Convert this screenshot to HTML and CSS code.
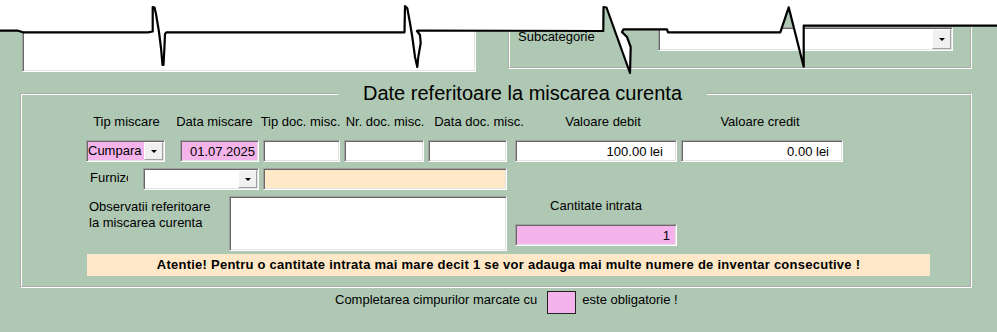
FILE: index.html
```html
<!DOCTYPE html>
<html lang="ro">
<head>
  <meta charset="UTF-8" />
  <title>Miscare inventar</title>
  <link rel="stylesheet" href="styles.css">
</head>
<body>
  <div class="page">
    <div class="top">
      <div class="memo sunken"></div>
      <div class="subgroup">
        <span class="sub-label">Subcategorie</span>
        <div class="combo combo-sub sunken">
          <span class="combo-text"></span>
          <span class="combo-btn"><i class="arrow"></i></span>
        </div>
      </div>
    </div>

    <fieldset class="frame">
      <legend>Date referitoare la miscarea curenta</legend>

      <div class="labels">
        <span class="col-tip">Tip miscare</span>
        <span class="col-data">Data miscare</span>
        <span class="col-tipdoc">Tip doc. misc.</span>
        <span class="col-nrdoc">Nr. doc. misc.</span>
        <span class="col-datadoc">Data doc. misc.</span>
        <span class="col-debit">Valoare debit</span>
        <span class="col-credit">Valoare credit</span>
      </div>

      <div class="fields">
        <div class="combo combo-tip sunken required">
          <span class="combo-text">Cumpara</span>
          <span class="combo-btn"><i class="arrow"></i></span>
        </div>
        <input type="text" class="field sunken required num in-data" value="01.07.2025" readonly />
        <input type="text" class="field sunken in-tipdoc" readonly />
        <input type="text" class="field sunken in-nrdoc" readonly />
        <input type="text" class="field sunken in-datadoc" readonly />
        <input type="text" class="field sunken num in-money" value="100.00 lei" readonly />
        <input type="text" class="field sunken num in-money" value="0.00 lei" readonly />
      </div>

      <div class="supplier">
        <span class="supplier-label">Furnizor</span>
        <div class="combo combo-supplier sunken">
          <span class="combo-text"></span>
          <span class="combo-btn"><i class="arrow"></i></span>
        </div>
        <input type="text" class="field sunken peach in-supplier" readonly />
      </div>

      <div class="notes">
        <span class="notes-label">Observatii referitoare<br>la miscarea curenta</span>
        <textarea class="memo-notes sunken" readonly></textarea>
        <div class="qty">
          <span class="qty-label">Cantitate intrata</span>
          <input type="text" class="field sunken required num in-qty" value="1" readonly />
        </div>
      </div>

      <div class="warning">Atentie! Pentru o cantitate intrata mai mare decit 1 se vor adauga mai multe numere de inventar consecutive !</div>
    </fieldset>

    <div class="footer">
      <span>Completarea cimpurilor marcate cu</span>
      <span class="mark"></span>
      <span>este obligatorie !</span>
    </div>

    <svg class="tear" width="997" height="80" viewBox="0 0 997 80">
      <polygon class="tear-fill" points="0,30.7 18,30.7 23,32.3 148,32.3 152.7,31.5 152.7,7 154.5,7.5 156,14 159,32 161,48 162.5,65 163.5,65 164.3,50 165,34 166.5,32.3 404.5,32.3 405,6 407.3,8.3 410,23 412.3,37 415,57 417.3,67 418.3,57 420.7,43 420,35 417,31 418,30.5 603.3,31 603.5,7 606.5,7.5 630,73 630.7,47 627,37 622,32 623.5,29.3 667,29.3 668,32.3 780.3,32.3 788.7,7.3 803.7,66.7 803.7,25.7 997,25.7 997,0 0,0" />
      <polyline class="tear-line" points="0,30.7 18,30.7 23,32.3 148,32.3 152.7,31.5 152.7,7 154.5,7.5 156,14 159,32 161,48 162.5,65 163.5,65 164.3,50 165,34 166.5,32.3 404.5,32.3 405,6 407.3,8.3 410,23 412.3,37 415,57 417.3,67 418.3,57 420.7,43 420,35 417,31 418,30.5 603.3,31 603.5,7 606.5,7.5 630,73 630.7,47 627,37 622,32 623.5,29.3 667,29.3 668,32.3 780.3,32.3 788.7,7.3 803.7,66.7 803.7,25.7 997,25.7" />
    </svg>
  </div>
</body>
</html>
```

FILE: styles.css
```css
* {
  box-sizing: border-box;
  margin: 0;
  padding: 0;
}

body {
  background-color: #afc8b4;
  font-family: "Liberation Sans", Arial, sans-serif;
  font-size: 13px;
  color: #000;
}

.page {
  position: relative;
  width: 997px;
  height: 332px;
  overflow: hidden;
}

/* classic sunken 3d edge */
.sunken {
  border: 1px solid;
  border-color: #a0a0a0 #fff #fff #a0a0a0;
  box-shadow: inset 1px 1px 0 #696969, inset -1px -1px 0 #e3e3e3;
  background-color: #fff;
}

.required {
  background-color: #f4b3ea;
}

.peach {
  background-color: #ffe8c7;
}

/* top part (cut off) */
.top {
  display: flex;
  align-items: flex-start;
  height: 72px;
}

.memo {
  margin-left: 22px;
  width: 454px;
  height: 72px;
}

.subgroup {
  display: flex;
  align-items: flex-start;
  margin-left: 32px;
  width: 464px;
  height: 69px;
  border: 2px groove #fff;
  padding: 25px 17px 0 8px;
}

.sub-label {
  flex: 1;
  line-height: 20px;
}

/* combo boxes */
.combo {
  display: flex;
  height: 22px;
  padding: 1px;
}

.combo-text {
  flex: 1;
  overflow: hidden;
  white-space: nowrap;
  line-height: 18px;
}

.combo-btn {
  display: flex;
  align-items: center;
  justify-content: center;
  width: 19px;
  background-color: #f0f0f0;
  border: 1px solid;
  border-color: #fff #a0a0a0 #a0a0a0 #fff;
}

.arrow {
  width: 0;
  height: 0;
  border-left: 3px solid transparent;
  border-right: 3px solid transparent;
  border-top: 3px solid #000;
}

.combo-sub {
  width: 295px;
  height: 24px;
}

.combo-tip {
  width: 79px;
  margin-right: 11px;
}

.combo-supplier {
  width: 116px;
  margin-left: 15px;
}

/* main frame */
.frame {
  margin: 10px 0 0 20px;
  width: 952px;
  min-width: 0;
  border: 2px groove #fff;
  padding: 0 0 10px 64px;
}

.frame legend {
  font-size: 20px;
  line-height: 23px;
  padding: 0 25px;
  margin-left: 252px;
  margin-bottom: 9px;
}

.labels {
  display: flex;
  height: 16px;
  line-height: 16px;
  white-space: nowrap;
}

.labels span {
  display: flex;
  justify-content: center;
}

.col-tip { width: 81px; }
.col-data { width: 95px; }
.col-tipdoc { width: 77px; }
.col-nrdoc { width: 92px; }
.col-datadoc { width: 96px; }
.col-debit { width: 152px; }
.col-credit { width: 162px; }

.fields {
  display: flex;
  gap: 4px;
  margin-top: 10px;
  height: 22px;
}

.field {
  height: 22px;
  font: inherit;
  color: #000;
  padding: 0 3px;
  outline: none;
}

.num {
  text-align: right;
}

.in-data { width: 79px; }
.in-tipdoc { width: 77px; }
.in-nrdoc { width: 80px; }
.in-datadoc { width: 79px; margin-right: 4px; }
.in-money { width: 162px; padding-right: 13px; }

.supplier {
  display: flex;
  margin-top: 6px;
  height: 22px;
}

.supplier-label {
  width: 42px;
  padding-left: 4px;
  overflow: hidden;
  white-space: nowrap;
  line-height: 20px;
}

.in-supplier {
  width: 244px;
  margin-left: 4px;
}

.notes {
  display: flex;
  margin-top: 6px;
  height: 55px;
}

.notes-label {
  width: 143px;
  padding: 3px 0 0 3px;
  line-height: 16px;
}

.memo-notes {
  width: 278px;
  height: 55px;
  resize: none;
  outline: none;
}

.qty {
  display: flex;
  flex-direction: column;
  margin-left: 8px;
  width: 162px;
}

.qty-label {
  padding-top: 2px;
  line-height: 16px;
  text-align: center;
}

.in-qty {
  margin-top: 10px;
  width: 162px;
  padding-right: 6px;
}

.warning {
  margin: 3px 0 0 1px;
  width: 843px;
  height: 22px;
  line-height: 22px;
  background-color: #ffe8c7;
  font-weight: bold;
  letter-spacing: 0.25px;
  text-align: center;
}

.footer {
  display: flex;
  align-items: flex-start;
  margin-top: 3px;
  padding-left: 335px;
  line-height: 18px;
}

.mark {
  width: 29px;
  height: 23px;
  margin: 0 6px 0 10px;
  background-color: #f4b3ea;
  border: 1px solid #222;
}

/* torn paper edge over the top */
.tear {
  position: absolute;
  top: 0;
  left: 0;
  pointer-events: none;
}

.tear-fill {
  fill: #fff;
}

.tear-line {
  fill: none;
  stroke: #000;
  stroke-width: 2.2;
  stroke-linejoin: round;
}
```
